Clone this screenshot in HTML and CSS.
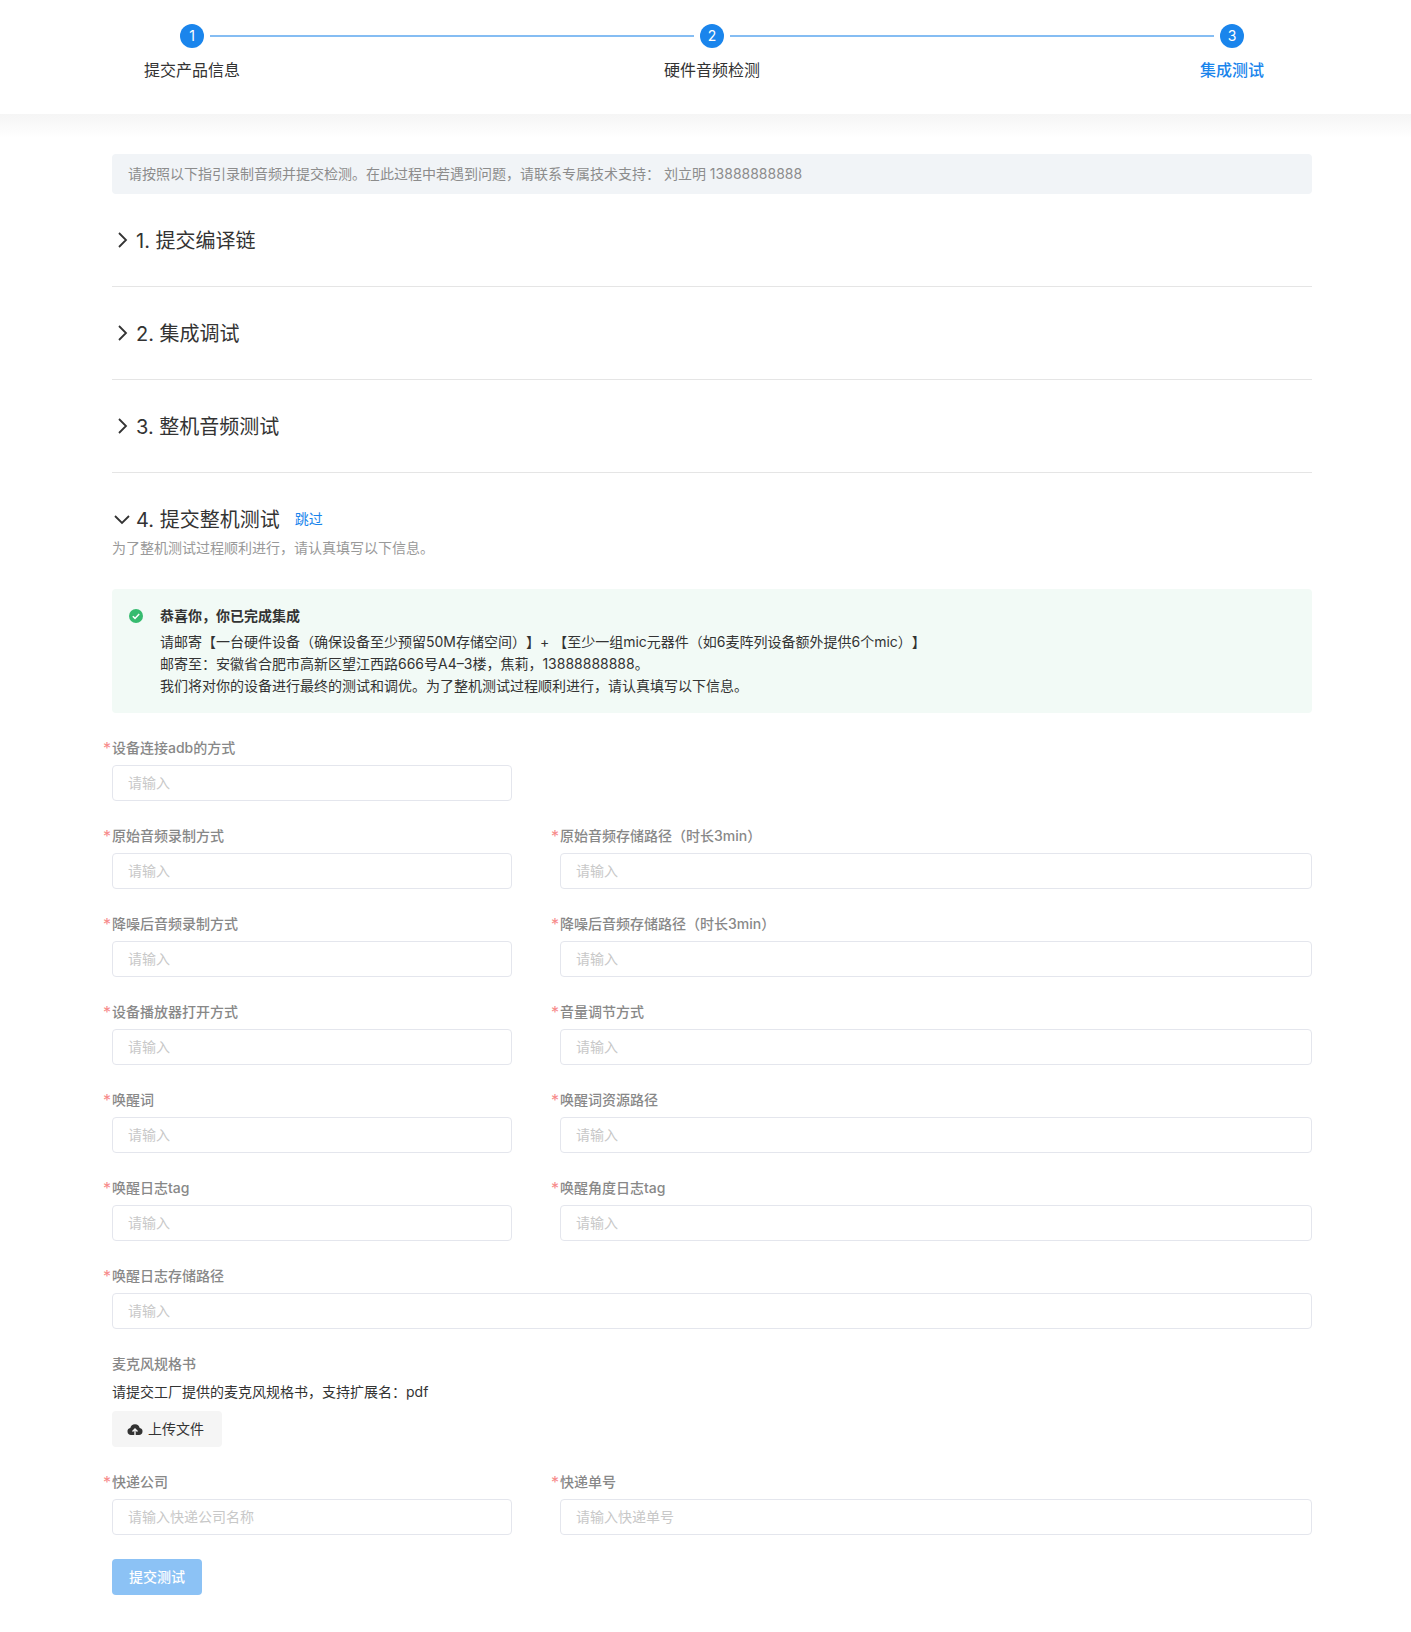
FILE: index.html
```html
<!DOCTYPE html>
<html lang="zh-CN">
<head>
  <meta charset="UTF-8">
  <meta name="viewport" content="width=device-width, initial-scale=1.0">
  <title>集成测试</title>
  <link rel="stylesheet" href="styles.css">
</head>
<body>
  <header class="stepper">
    <div class="step-track">
      <span class="step-num">1</span>
      <span class="step-line"></span>
      <span class="step-num">2</span>
      <span class="step-line"></span>
      <span class="step-num">3</span>
    </div>
    <div class="step-labels">
      <span class="step-label">提交产品信息</span>
      <span class="step-label">硬件音频检测</span>
      <span class="step-label active">集成测试</span>
    </div>
  </header>
  <div class="stepper-shade"></div>

  <main class="content">
    <div class="notice">请按照以下指引录制音频并提交检测。在此过程中若遇到问题，请联系专属技术支持： 刘立明 13888888888</div>

    <section class="section">
      <h2 class="section-title">
        <svg class="arrow" viewBox="0 0 20 20"><path d="M7 3l7 7-7 7"/></svg>
        <span>1. 提交编译链</span>
      </h2>
    </section>
    <section class="section">
      <h2 class="section-title">
        <svg class="arrow" viewBox="0 0 20 20"><path d="M7 3l7 7-7 7"/></svg>
        <span>2. 集成调试</span>
      </h2>
    </section>
    <section class="section">
      <h2 class="section-title">
        <svg class="arrow" viewBox="0 0 20 20"><path d="M7 3l7 7-7 7"/></svg>
        <span>3. 整机音频测试</span>
      </h2>
    </section>

    <section class="section open">
      <h2 class="section-title">
        <svg class="arrow" viewBox="0 0 20 20"><path d="M3 7l7 7 7-7"/></svg>
        <span>4. 提交整机测试</span>
        <a class="skip" href="#">跳过</a>
      </h2>
      <p class="section-desc">为了整机测试过程顺利进行，请认真填写以下信息。</p>

      <div class="success">
        <svg class="success-icon" viewBox="0 0 14 14">
          <circle cx="7" cy="7" r="7"/>
          <path d="M3.8 7.2l2.2 2.2 4.2-4.4"/>
        </svg>
        <div>
          <div class="success-title">恭喜你，你已完成集成</div>
          <div>请邮寄【一台硬件设备（确保设备至少预留50M存储空间）】+ 【至少一组mic元器件（如6麦阵列设备额外提供6个mic）】</div>
          <div>邮寄至：安徽省合肥市高新区望江西路666号A4–3楼，焦莉，13888888888。</div>
          <div>我们将对你的设备进行最终的测试和调优。为了整机测试过程顺利进行，请认真填写以下信息。</div>
        </div>
      </div>

      <form class="form">
        <div class="field">
          <label class="required">设备连接adb的方式</label>
          <input type="text" placeholder="请输入">
        </div>
        <div></div>
        <div class="field">
          <label class="required">原始音频录制方式</label>
          <input type="text" placeholder="请输入">
        </div>
        <div class="field">
          <label class="required">原始音频存储路径（时长3min）</label>
          <input type="text" placeholder="请输入">
        </div>
        <div class="field">
          <label class="required">降噪后音频录制方式</label>
          <input type="text" placeholder="请输入">
        </div>
        <div class="field">
          <label class="required">降噪后音频存储路径（时长3min）</label>
          <input type="text" placeholder="请输入">
        </div>
        <div class="field">
          <label class="required">设备播放器打开方式</label>
          <input type="text" placeholder="请输入">
        </div>
        <div class="field">
          <label class="required">音量调节方式</label>
          <input type="text" placeholder="请输入">
        </div>
        <div class="field">
          <label class="required">唤醒词</label>
          <input type="text" placeholder="请输入">
        </div>
        <div class="field">
          <label class="required">唤醒词资源路径</label>
          <input type="text" placeholder="请输入">
        </div>
        <div class="field">
          <label class="required">唤醒日志tag</label>
          <input type="text" placeholder="请输入">
        </div>
        <div class="field">
          <label class="required">唤醒角度日志tag</label>
          <input type="text" placeholder="请输入">
        </div>
        <div class="field wide">
          <label class="required">唤醒日志存储路径</label>
          <input type="text" placeholder="请输入">
        </div>
        <div class="field wide">
          <label>麦克风规格书</label>
          <p class="upload-tip">请提交工厂提供的麦克风规格书，支持扩展名：pdf</p>
          <button class="upload-btn" type="button">
            <svg class="upload-icon" viewBox="0 0 16 16">
              <path class="cloud" d="M4 14a3.5 3.5 0 0 1-.7-6.93 4.8 4.8 0 0 1 9.4 0A3.5 3.5 0 0 1 12 14z"/>
              <path class="up" d="M8 14V8.6M5.5 10.6L8 8.1l2.5 2.5"/>
            </svg>
            上传文件
          </button>
        </div>
        <div class="field">
          <label class="required">快递公司</label>
          <input type="text" placeholder="请输入快递公司名称">
        </div>
        <div class="field">
          <label class="required">快递单号</label>
          <input type="text" placeholder="请输入快递单号">
        </div>
        <div class="wide">
          <button class="submit-btn" type="button">提交测试</button>
        </div>
      </form>
    </section>
  </main>
</body>
</html>
```

FILE: styles.css
```css
* {
  box-sizing: border-box;
}
body {
  margin: 0;
  background-color: #fff;
  color: #333;
  font-family: Inter, "Noto Sans CJK SC", sans-serif;
  font-size: 14px;
  line-height: 22px;
  text-spacing-trim: space-all;
}
.stepper {
  height: 114px;
  padding: 24px 99px 0 112px;
}
.step-track {
  display: flex;
  align-items: center;
  padding: 0 68px;
}
.step-num {
  width: 24px;
  height: 24px;
  border-radius: 50%;
  background-color: #1a85ec;
  color: #fff;
  font-size: 14px;
  line-height: 24px;
  text-align: center;
}
.step-line {
  flex: 1;
  height: 2px;
  margin: 0 6px;
  background-color: #85bdf3;
}
.step-labels {
  display: flex;
  justify-content: space-between;
  margin-top: 10px;
}
.step-label {
  width: 160px;
  font-size: 16px;
  line-height: 24px;
  text-align: center;
}
.step-label.active {
  color: #1a85ec;
  font-weight: 500;
}
.stepper-shade {
  height: 24px;
  background: linear-gradient(#f5f5f5, #fff);
}
.content {
  margin: 16px 99px 0 112px;
  padding-bottom: 36px;
}
.notice {
  height: 40px;
  padding: 0 16px;
  border-radius: 4px;
  background-color: #f1f4f7;
  color: #8c8c8c;
  line-height: 40px;
}
.section {
  padding: 32px 0;
  border-bottom: 1px solid #e5e5e5;
}
.section.open {
  padding-bottom: 0;
  border-bottom: 0;
}
.section-title {
  display: flex;
  align-items: center;
  height: 28px;
  margin: 0;
  color: #333;
  font-size: 20px;
  font-weight: 400;
  line-height: 28px;
}
.section-title span {
  padding-top: 1px;
}
.arrow {
  width: 20px;
  height: 20px;
  margin-right: 4px;
  fill: none;
  stroke: #333;
  stroke-width: 1.8;
}
.skip {
  margin-left: 15px;
  color: #1a85ec;
  font-size: 14px;
  text-decoration: none;
}
.section-desc {
  margin: 4px 0 0;
  color: #999;
}
.success {
  display: flex;
  gap: 13px;
  margin-top: 30px;
  padding: 16px 16px 16px 17px;
  border-radius: 4px;
  background-color: #f2faf6;
}
.success-icon {
  flex: none;
  width: 14px;
  height: 14px;
  margin-top: 4px;
  margin-right: 4px;
}
.success-icon circle {
  fill: #36bb6f;
}
.success-icon path {
  fill: none;
  stroke: #fff;
  stroke-width: 1.5;
}
.success-title {
  margin-bottom: 4px;
  font-weight: 600;
}
.form {
  display: grid;
  grid-template-columns: 400px 752px;
  gap: 24px 48px;
  margin-top: 24px;
}
.wide {
  grid-column: 1 / -1;
}
.field label {
  display: block;
  margin-bottom: 6px;
  color: #888;
  font-weight: 500;
}
.field .required {
  position: relative;
}
.required::before {
  content: "*";
  position: absolute;
  left: -9px;
  top: 0;
  color: #f78989;
  font-size: 16px;
  font-weight: 400;
}
.field input {
  display: block;
  width: 100%;
  height: 36px;
  padding: 0 15px 2px;
  border: 1px solid #e4e6ed;
  border-radius: 4px;
  outline: none;
  color: #333;
  font-family: inherit;
  font-size: 14px;
}
.field input::placeholder {
  color: #c8c8c8;
}
.upload-tip {
  margin: 0 0 8px;
}
.upload-btn {
  display: flex;
  align-items: center;
  gap: 5px;
  width: 110px;
  height: 36px;
  padding: 0 0 2px 15px;
  border: 0;
  border-radius: 4px;
  background-color: #f5f5f5;
  color: #333;
  font-family: inherit;
  font-size: 14px;
}
.upload-icon {
  width: 16px;
  height: 16px;
  margin-top: 1px;
}
.upload-icon .cloud {
  fill: #333;
}
.upload-icon .up {
  fill: none;
  stroke: #f5f5f5;
  stroke-width: 1.4;
}
.submit-btn {
  display: block;
  width: 90px;
  height: 36px;
  padding: 0 0 2px;
  border: 0;
  border-radius: 4px;
  background-color: #8cc2f5;
  color: #fff;
  font-family: inherit;
  font-size: 14px;
  font-weight: 500;
}
```
